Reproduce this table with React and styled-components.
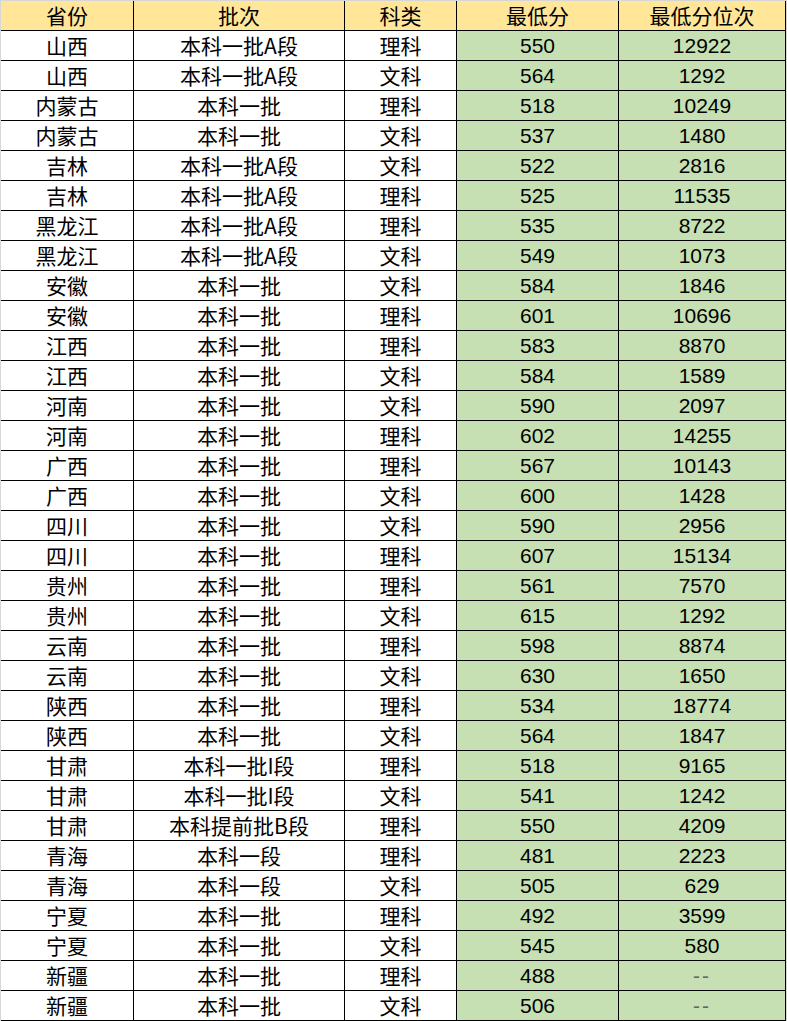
import React from 'react';
import styled, { createGlobalStyle } from 'styled-components';

const rows = [
  ['山西', '本科一批A段', '理科', '550', '12922'],
  ['山西', '本科一批A段', '文科', '564', '1292'],
  ['内蒙古', '本科一批', '理科', '518', '10249'],
  ['内蒙古', '本科一批', '文科', '537', '1480'],
  ['吉林', '本科一批A段', '文科', '522', '2816'],
  ['吉林', '本科一批A段', '理科', '525', '11535'],
  ['黑龙江', '本科一批A段', '理科', '535', '8722'],
  ['黑龙江', '本科一批A段', '文科', '549', '1073'],
  ['安徽', '本科一批', '文科', '584', '1846'],
  ['安徽', '本科一批', '理科', '601', '10696'],
  ['江西', '本科一批', '理科', '583', '8870'],
  ['江西', '本科一批', '文科', '584', '1589'],
  ['河南', '本科一批', '文科', '590', '2097'],
  ['河南', '本科一批', '理科', '602', '14255'],
  ['广西', '本科一批', '理科', '567', '10143'],
  ['广西', '本科一批', '文科', '600', '1428'],
  ['四川', '本科一批', '文科', '590', '2956'],
  ['四川', '本科一批', '理科', '607', '15134'],
  ['贵州', '本科一批', '理科', '561', '7570'],
  ['贵州', '本科一批', '文科', '615', '1292'],
  ['云南', '本科一批', '理科', '598', '8874'],
  ['云南', '本科一批', '文科', '630', '1650'],
  ['陕西', '本科一批', '理科', '534', '18774'],
  ['陕西', '本科一批', '文科', '564', '1847'],
  ['甘肃', '本科一批I段', '理科', '518', '9165'],
  ['甘肃', '本科一批I段', '文科', '541', '1242'],
  ['甘肃', '本科提前批B段', '理科', '550', '4209'],
  ['青海', '本科一段', '理科', '481', '2223'],
  ['青海', '本科一段', '文科', '505', '629'],
  ['宁夏', '本科一批', '理科', '492', '3599'],
  ['宁夏', '本科一批', '文科', '545', '580'],
  ['新疆', '本科一批', '理科', '488', '--'],
  ['新疆', '本科一批', '文科', '506', '--'],
];

const headers = ['省份', '批次', '科类', '最低分', '最低分位次'];

const GlobalStyle = createGlobalStyle`
  html, body {
    margin: 0;
    padding: 0;
    background: #d6d6d6;
  }
`;

const Page = styled.div`
  padding: 1px 0 0 1px;
  width: 787px;
  box-sizing: border-box;
`;

const Sheet = styled.div`
  display: grid;
  grid-template-columns: 133px 211px 112px 162px 167px;
  grid-auto-rows: 30px;
  width: 785px;
  background: #fff;
  font-family: "Noto Sans CJK SC", "Noto Sans", sans-serif;
  font-size: 21px;
  color: #000;
`;

const Cell = styled.div`
  box-sizing: border-box;
  display: flex;
  align-items: center;
  justify-content: center;
  border-right: 1px solid #000;
  border-bottom: 1px solid #000;
  background: ${({ $green }) => ($green ? '#c6e0b4' : '#fff')};
  white-space: nowrap;
  line-height: 1;
`;

const HeadCell = styled(Cell)`
  background: #ffe699;
  font-weight: 400;
`;

const Num = styled.span`
  font-family: "Liberation Sans", "Noto Sans", sans-serif;
  font-size: 21px;
  letter-spacing: ${({ $dash }) => ($dash ? '2px' : '0')};
  color: ${({ $dash }) => ($dash ? '#666' : '#000')};
`;

export default function App() {
  return (
    <Page>
      <GlobalStyle />
      <Sheet>
        {headers.map((h) => (
          <HeadCell key={h}>{h}</HeadCell>
        ))}
        {rows.map((r, i) => (
          <React.Fragment key={i}>
            <Cell>{r[0]}</Cell>
            <Cell>{r[1]}</Cell>
            <Cell>{r[2]}</Cell>
            <Cell $green>
              <Num>{r[3]}</Num>
            </Cell>
            <Cell $green>
              <Num $dash={r[4] === '--'}>{r[4]}</Num>
            </Cell>
          </React.Fragment>
        ))}
      </Sheet>
    </Page>
  );
}
